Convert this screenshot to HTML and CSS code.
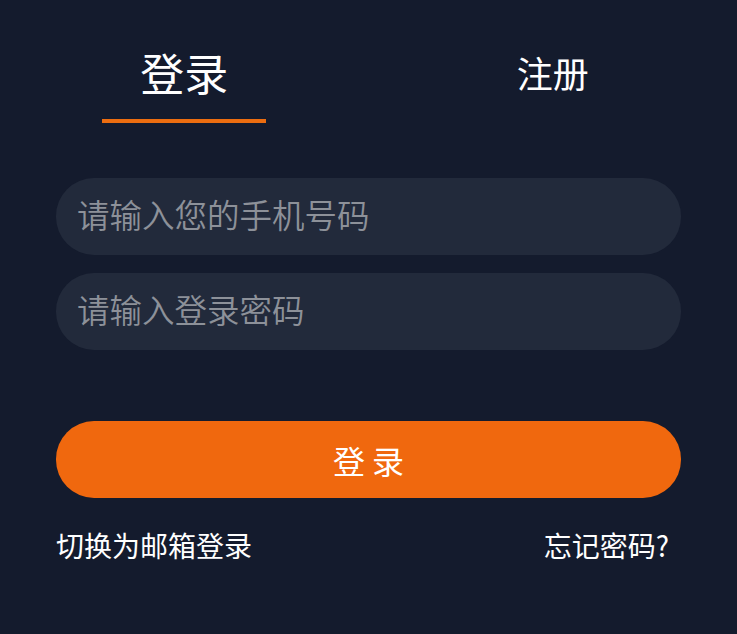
FILE: index.html
```html
<!DOCTYPE html>
<html lang="zh-CN">
<head>
<meta charset="utf-8">
<title>登录</title>
<link rel="stylesheet" href="styles.css">
</head>
<body>
<div class="page">
  <div class="tabs">
    <div class="tab tab-active"><span class="tab-label">登录</span><span class="tab-bar"></span></div>
    <div class="tab"><span class="tab-label">注册</span></div>
  </div>
  <form class="form">
    <input class="field" type="text" placeholder="请输入您的手机号码">
    <input class="field" type="password" placeholder="请输入登录密码">
    <button class="submit" type="button">登 录</button>
    <div class="links">
      <span class="link">切换为邮箱登录</span>
      <span class="link link-right">忘记密码?</span>
    </div>
  </form>
</div>
</body>
</html>
```

FILE: styles.css
```css
* { box-sizing: border-box; }
html, body {
  margin: 0;
  padding: 0;
  background: #141b2d;
}
body {
  font-family: "Noto Sans CJK SC", "Noto Sans", sans-serif;
  font-weight: 400;
  color: #ffffff;
}
.page {
  width: 737px;
  height: 634px;
  background: #141b2d;
}
.tabs {
  display: flex;
  padding-top: 50px;
  height: 124px;
}
.tab {
  flex: 1;
  display: flex;
  flex-direction: column;
  align-items: center;
}
.tab-label {
  font-size: 36px;
  line-height: 44px;
  height: 44px;
  color: #ffffff;
}
.tab-active .tab-label {
  font-size: 44px;
}
.tab-bar {
  display: block;
  width: 164px;
  height: 4px;
  margin-top: 25px;
  background: #ec6d10;
}
.form {
  margin: 54px 56px 0;
  display: flex;
  flex-direction: column;
}
.field {
  display: block;
  width: 100%;
  height: 77px;
  border: none;
  outline: none;
  border-radius: 38px;
  background: #222a3b;
  padding: 0 22px 6px 21px;
  font-family: "Noto Sans CJK SC", "Noto Sans", sans-serif;
  font-weight: 350;
  font-size: 32.5px;
  color: #ffffff;
  margin-bottom: 18px;
}
.field::placeholder {
  color: #8d9199;
}
.submit {
  display: block;
  width: 100%;
  height: 77px;
  margin-top: 53px;
  border: none;
  border-radius: 38px;
  background: #f0680e;
  color: #ffffff;
  font-family: "Noto Sans CJK SC", "Noto Sans", sans-serif;
  font-weight: 400;
  font-size: 32px;
  padding: 0;
}
.links {
  display: flex;
  justify-content: space-between;
  margin-top: 33px;
}
.link {
  font-size: 28px;
  line-height: 28px;
  color: #ffffff;
}
.link-right {
  margin-right: 12px;
}
```
